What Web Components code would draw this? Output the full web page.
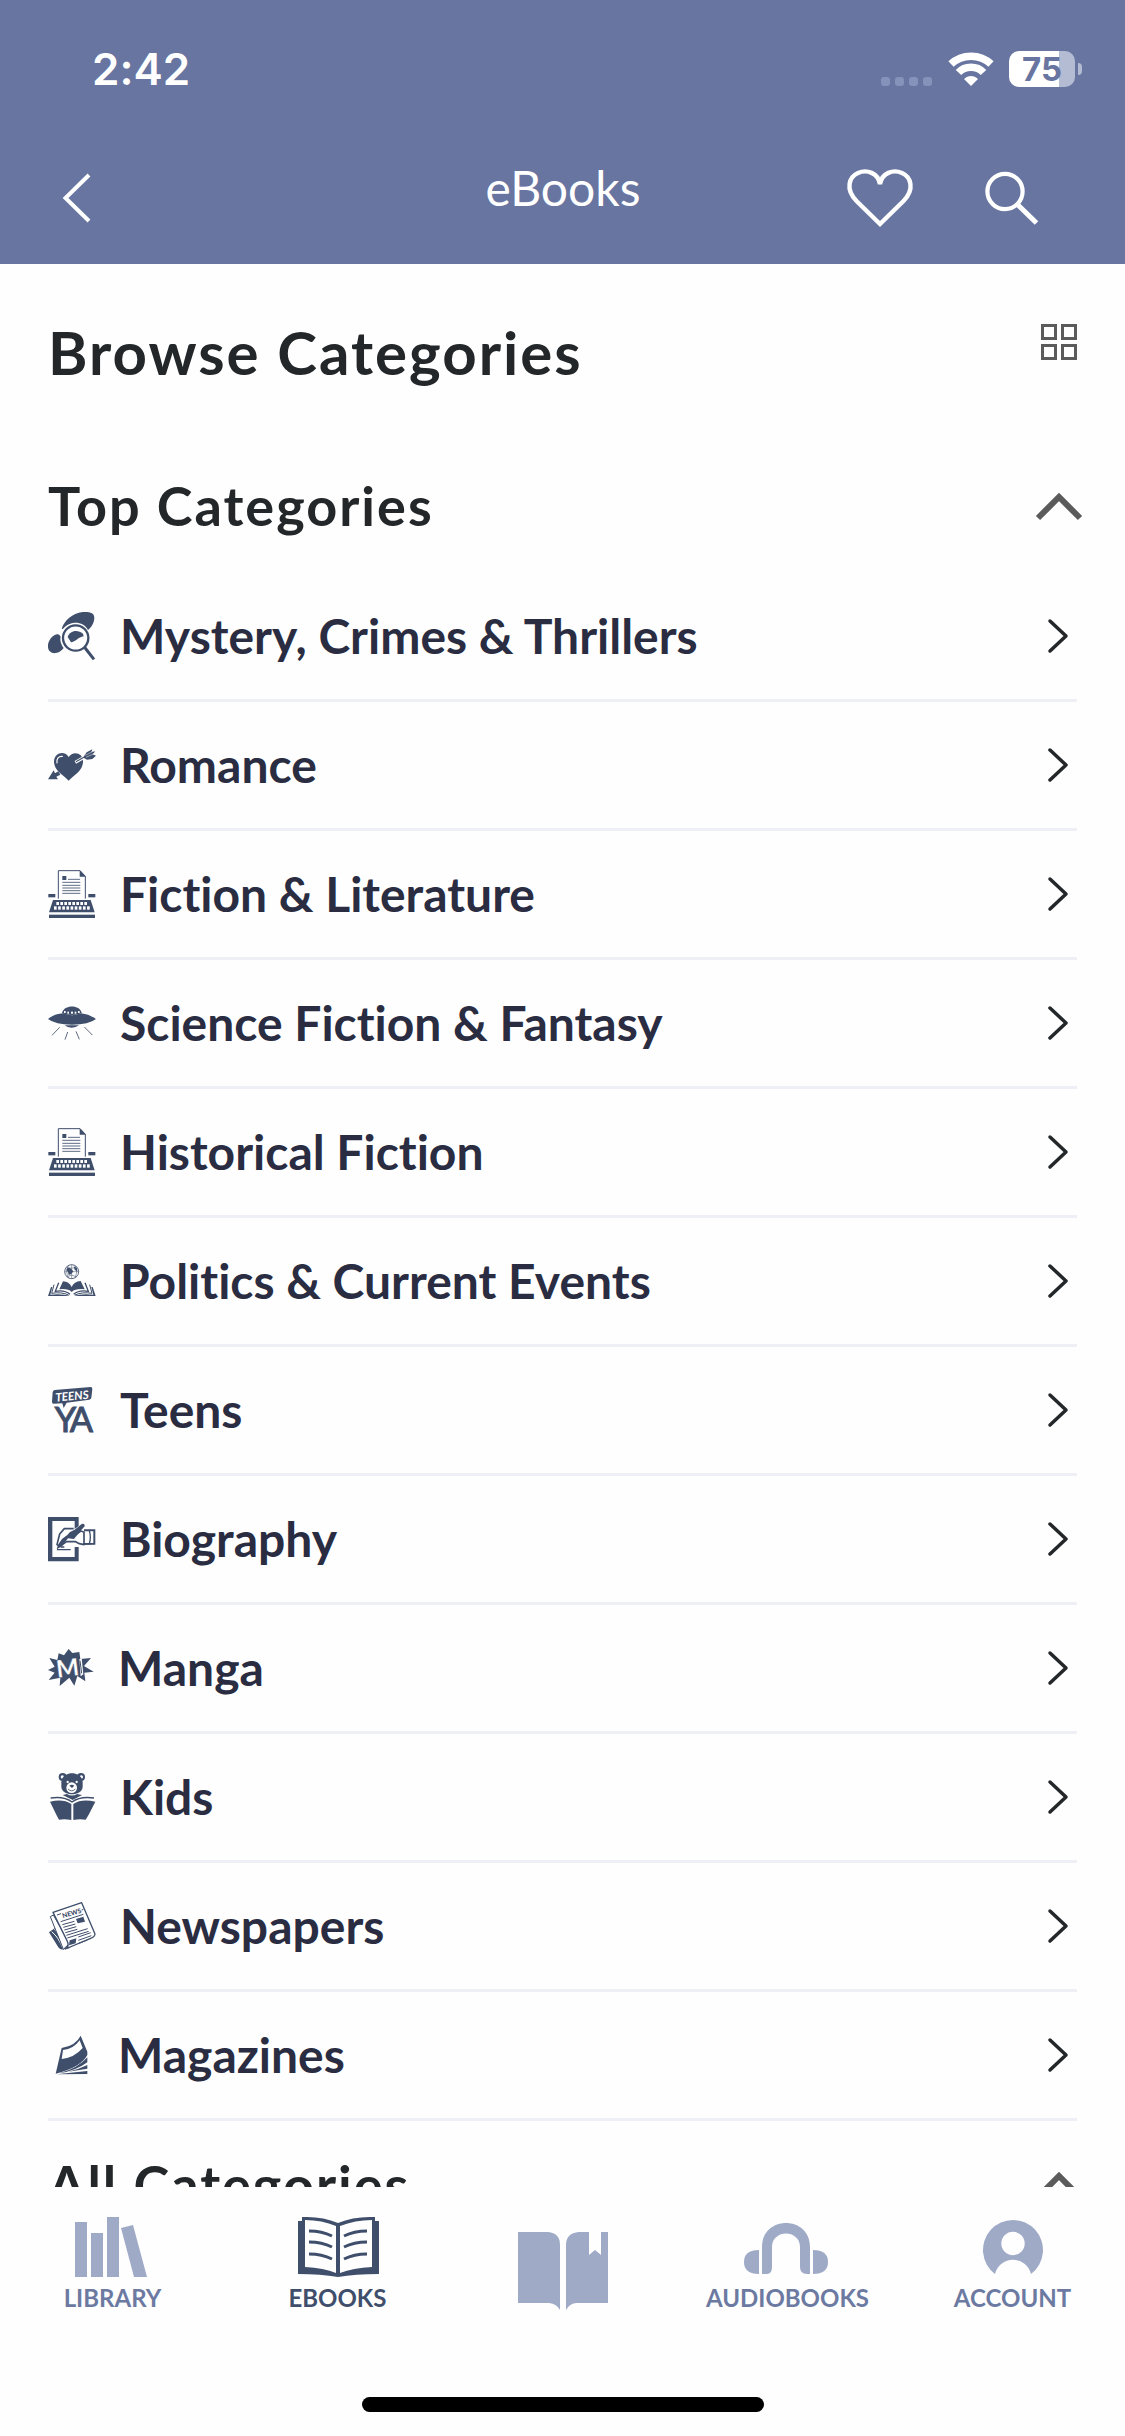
<!DOCTYPE html>
<html lang="en">
<head>
<meta charset="utf-8">
<meta name="viewport" content="width=device-width, initial-scale=1">
<title>eBooks</title>
<style>
  html, body { height: 100%; margin: 0; }
  body {
    --brand: #6875a1;
    --heading: #232729;
    --row: #2a2d42;
    --glyph: #3f4e6b;
    --muted: #9faac7;
    --muted-text: #6c7aa2;
    --rule: #eef0f6;
    background: #fefefe;
    font-family: Lato, "Open Sans", sans-serif;
    font-variant-ligatures: none;
  }
</style>
</head>
<body>
<ebook-app>
  <status-bar slot="top" time="2:42" battery="75"></status-bar>
  <nav-bar slot="top">eBooks</nav-bar>
  <page-heading>Browse Categories</page-heading>
  <category-section heading="Top Categories">
    <category-row icon="mystery">Mystery, Crimes &amp; Thrillers</category-row>
    <category-row icon="romance">Romance</category-row>
    <category-row icon="typewriter">Fiction &amp; Literature</category-row>
    <category-row icon="ufo">Science Fiction &amp; Fantasy</category-row>
    <category-row icon="typewriter">Historical Fiction</category-row>
    <category-row icon="politics">Politics &amp; Current Events</category-row>
    <category-row icon="teens">Teens</category-row>
    <category-row icon="biography">Biography</category-row>
    <category-row icon="manga">Manga</category-row>
    <category-row icon="kids">Kids</category-row>
    <category-row icon="news">Newspapers</category-row>
    <category-row icon="magazine">Magazines</category-row>
  </category-section>
  <category-section heading="All Categories"></category-section>
  <tab-bar slot="bottom">
    <tab-item icon="library">LIBRARY</tab-item>
    <tab-item icon="ebooks" active>EBOOKS</tab-item>
    <tab-item icon="reader" label="Now reading"></tab-item>
    <tab-item icon="audio">AUDIOBOOKS</tab-item>
    <tab-item icon="account">ACCOUNT</tab-item>
  </tab-bar>
</ebook-app>

<script>
const keys = (y, x0, n, step, w, h) =>
  Array.from({ length: n }, (_, i) => `<rect x="${x0 + i * step}" y="${y}" width="${w}" height="${h}" fill="#fff"/>`).join('');

/* Each entry: [width, height, viewBox, markup] */
const ICONS = {
  back: [28, 50, '0 0 28 50', '<path d="M26 2 2.500 25 26 48" fill="none" stroke="#fff" stroke-width="4"/>'],
  heart: [66, 58, '0 0 66 58', '<path d="M33 55 9.500 32C-2 20 2 8 11 4 20 0 31 4 33 15 35 4 46 0 55 4 64 8 68 20 56.500 32Z" fill="none" stroke="#fff" stroke-width="4.400"/>'],
  search: [54, 54, '0 0 54 54', '<circle cx="20" cy="20.500" r="17.600" fill="none" stroke="#fff" stroke-width="4.200"/><path d="M32 33 51.500 52" stroke="#fff" stroke-width="5" fill="none"/>'],
  wifi: [46, 34, '0 0 46 34', '<g fill="none" stroke="#fff" stroke-width="7.500"><path d="M3 12C14 1.500 32 1.500 43 12"/><path d="M10.500 20.500C17 13.500 29 13.500 35.500 20.500"/></g><path d="M16 27C20 23 26 23 30 27L23 34Z" fill="#fff"/>'],
  grid: [36, 36, '0 0 36 36', '<g fill="none" stroke="#5b5b5b" stroke-width="3"><path d="M1.500 1.500H14.500V14.500H1.500ZM21.500 1.500H34.500V14.500H21.500ZM1.500 21.500H14.500V34.500H1.500ZM21.500 21.500H34.500V34.500H21.500Z"/></g>'],
  up: [46, 28, '0 0 46 28', '<path d="M2 26 23 5 44 26" fill="none" stroke="#5b5b5b" stroke-width="6"/>'],
  next: [20, 34, '0 0 20 34', '<path d="M2 2 18 17 2 32" fill="none" stroke="#232729" stroke-width="3.500" stroke-linecap="round" stroke-linejoin="round"/>'],

  mystery: [48, 48, '0 0 144 144', `
    <path d="M41 50C50 25 72 4 104 0 124-1 140 1 139 19 138 34 130 47 120 54 112 38 96 31 80 32 64 33 50 43 45 51Z"/>
    <path d="M27 67C13 69-2 88 0 106 1 119 12 125 24 123 36 121 42 114 47 108 39 98 35 82 38 74Q34 66 27 67Z"/>
    <circle cx="83" cy="78" r="38" fill="none" stroke="currentColor" stroke-width="7"/>
    <path d="M59 75C63 58 87 49 105 65L107 73C91 75 82 90 69 91Z"/>
    <path d="M109 105 138 142" stroke="currentColor" stroke-width="9" fill="none"/>`],
  romance: [48, 48, '0 0 144 144', `
    <path d="M62 119C48 103 18 89 18 62 18 34 51 27 62 48 74 29 105 34 105 62 105 89 77 103 62 119Z"/>
    <path d="M27 66C25 52 32 45 43 46" stroke="#fff" stroke-width="3.500" fill="none" stroke-linecap="round"/>
    <path d="M82 64 120 42" stroke="#fff" stroke-width="9"/>
    <path d="M0 115 17 88 21 97 31 91 37 101 25 107 30 115Z"/>
    <path d="M84 62 136 32" stroke="currentColor" stroke-width="3.500"/>
    <path d="M109 44 116 34 133 25 130 34 142 31 134 40 144 44 133 54 117 56 107 50Z"/>
    <path d="M112 43 137 30M114 49 138 38" stroke="#fff" stroke-width="1.500"/>`],
  typewriter: [48, 48, '0 0 144 144', `
    <path d="M31 86V2H96L112 19V86" fill="none" stroke="currentColor" stroke-width="3"/><path d="M95 0 114 20H95Z"/>
    <rect x="43" y="18" width="12" height="12"/>
    <path d="M60 28H96M43 37H97M43 46H97M43 54H97M43 62H97M43 70H97" stroke="currentColor" stroke-width="2.500"/>
    <rect x="1" y="72" width="21" height="10"/><rect x="121" y="72" width="21" height="10"/>
    <path d="M15 90H128L140 127H3Z"/><rect x="3" y="134" width="138" height="10"/>
    ${keys(96, 25, 8, 12, 8, 9)}${keys(109, 18, 9, 12.4, 8, 10)}`],
  ufo: [48, 48, '0 0 144 144', `
    <path d="M0 60Q20 44 46 43 72 54 99 43 124 46 144 60 123 77 72 77 22 77 0 60Z"/>
    <path d="M42 42C48 16 96 16 101 42 84 50 60 50 42 42Z"/>
    <g fill="#fff"><rect x="48" y="36" width="5" height="6"/><rect x="58" y="38" width="5" height="6"/><rect x="69" y="38" width="6" height="6"/><rect x="80" y="38" width="5" height="6"/><rect x="90" y="36" width="5" height="6"/></g>
    <path d="M50 79H93Q84 86 71 86 58 86 50 79Z"/>
    <path d="M35 85 12 109M59 99 51 122M84 97 94 121M109 84 133 108" stroke="currentColor" stroke-width="2.500"/>`],
  politics: [48, 48, '0 0 144 144', `
    <circle cx="71" cy="44" r="21" fill="none" stroke="currentColor" stroke-width="2.500"/>
    <path d="M50 44H92M71 23V65M56 30Q71 38 86 30M56 59Q71 50 86 59M62 25Q50 44 62 63M80 25Q92 44 80 63" fill="none" stroke="currentColor" stroke-width="1.500"/>
    <path d="M58 32 68 34 76 43 70 51 62 54 60 44 55 40ZM77 28 87 34 88 44 80 38Z"/>
    <path d="M45 73Q63 74 71 90 78 74 98 72L110 97Q83 94 71 105 60 94 34 97Z"/>
    <path d="M32 77 22 103Q50 98 66 112M111 77 121 103Q93 98 77 112" fill="none" stroke="currentColor" stroke-width="4"/>
    <path d="M18 83 11 109Q40 104 62 114M125 83 132 109Q103 104 81 114" fill="none" stroke="currentColor" stroke-width="3"/>
    <path d="M9 90 0 117H66Q45 110 7 113L13 90ZM134 90 143 117H77Q98 110 136 113L130 90Z"/>`],
  teens: [48, 48, '0 0 144 144', `
    <path d="M20 12 128 3Q133 3 133 9L130 35Q129 40 124 41L56 50 47 66 43 52 17 53Q11 53 12 47L14 18Q15 13 20 12Z"/>
    <text x="23" y="47" transform="rotate(-5 23 47)" font-family="Lato" font-weight="700" font-style="italic" font-size="35" fill="#fff">TEENS</text>
    <text x="20 65" y="138" font-family="Lato" font-weight="400" font-size="103" stroke="currentColor" stroke-width="3">YA</text>`],
  biography: [48, 48, '0 0 144 144', `
    <path d="M0 6H92V33L80 42V18H13V126H80V96H92V139H0Z"/>
    <path d="M77 41H49L35 57 27 89 35 94 56 80H83L94 86 108 89V51L98 48 81 61" fill="none" stroke="currentColor" stroke-width="5" stroke-linejoin="round"/>
    <path d="M26 103 30 89 42 72 58 60 66 51 80 44 101 27Q111 24 110 34L94 52 78 72 60 70 42 94Z"/>
    <path d="M27 104H68M38 96H49" stroke="currentColor" stroke-width="4"/>
    <path d="M108 46H139V86L108 87" fill="none" stroke="currentColor" stroke-width="6"/><path d="M124 47Q130 67 124 86" fill="none" stroke="currentColor" stroke-width="4"/>`],
  manga: [46, 48, '0 0 138 144', `
    <path d="M4 42 28 48 32 28 48 34 62 15 73 27 94 24 97 45 129 42 108 66 137 83 109 86 112 112 88 96 79 125 64 101 35 126 37 101 2 108 20 86 0 78 20 68Z"/>
    <text x="28" y="101" transform="rotate(-7 30 100)" font-family="Lato" font-weight="900" font-size="72" fill="#fff" stroke="#3f4e6b" stroke-width="1">M</text>
    <path d="M94 46 101 43 106 91 98 97Z" fill="#fff"/><path d="M96 50 101 88" stroke="currentColor" stroke-width="3"/>`],
  kids: [48, 48, '0 0 144 144', `
    <circle cx="44" cy="12" r="12"/><circle cx="99" cy="12" r="12"/><circle cx="43" cy="12" r="5" fill="#fff"/><circle cx="100" cy="12" r="5" fill="#fff"/>
    <path d="M40 28C42-8 102-8 104 28L104 42C101 71 43 71 40 42Z"/>
    <circle cx="59" cy="27" r="3.500" fill="#fff"/><circle cx="86" cy="27" r="3.500" fill="#fff"/>
    <circle cx="71" cy="44" r="16" fill="#fff"/><path d="M64 38Q72 33 79 38L72 45Z"/><path d="M60 48Q71 59 82 48" fill="none" stroke="currentColor" stroke-width="2.500"/>
    <path d="M44 66 57 63Q72 72 87 63L102 66 74 81Z"/>
    <path d="M8 75Q48 69 72 87 96 69 138 75" fill="none" stroke="currentColor" stroke-width="4"/>
    <path d="M6 86Q46 77 70 93V141Q50 137 33 140L25 125ZM142 86Q100 77 76 93V141Q94 137 113 140L122 125Z"/>`],
  news: [48, 48, '0 0 144 144', `
    <path d="M3 91 25 75 67 138 47 142Q37 145 31 136Z"/>
    <path d="M11 89Q32 106 45 140M19 82Q40 101 55 139" stroke="#fff" stroke-width="3" fill="none"/>
    <path d="M7 44 16 39 65 124 46 142Z" fill="#fff" stroke="currentColor" stroke-width="3"/>
    <path d="M15 31 101 2 141 96Q140 105 128 109L52 141Q66 133 57 116Z" fill="#fff" stroke="currentColor" stroke-width="4" stroke-linejoin="round"/>
    <text x="45" y="49" transform="rotate(-17 45 49)" font-family="Lato" font-weight="900" font-size="20">NEWS</text>
    <path d="M27 39 39 35M101 24 106 22M38 59 106 37M43 68 79 58M46 76 82 66M49 84 85 74M52 92 88 82M55 100 119 80M58 108 122 88M91 105 128 92M91 115 130 101M92 124 118 114" stroke="currentColor" stroke-width="3"/>
    <path d="M84 51 106 44 111 59 89 64ZM65 115 85 109 83 124 63 130Z"/>`],
  magazine: [46, 48, '0 0 138 144', `
    <path fill-rule="evenodd" d="M41 51Q83 44 98 14L118 62V72Q99 109 23 128ZM45 57 41 84Q79 80 104 51L95 28Q77 54 45 57Z"/>
    <path d="M118 79V94Q85 119 34 127 91 111 118 79ZM118 102V113L61 122Q92 115 118 102ZM118 120V129L25 130Z"/>`],

  library: [90, 60, '0 0 90 60', '<path d="M7 5H19V60H7ZM23 16H35V60H23ZM39 0H51V60H39ZM53 11 65 8 79 60H66Z"/>'],
  ebooks: [90, 60, '0 0 90 60', `
    <path fill-rule="evenodd" d="M5 4H9V0Q29-1 45 6 61-1 82 0V4H86V57Q62 57 45 60 28 57 5 57ZM12 3V50Q31 51 43 56V9Q29 3 12 3ZM79 3Q62 3 47 9V56Q60 51 79 50Z"/>
    <path d="M16 14Q29 14 39 19M16 25Q29 25 39 30M16 37Q29 37 39 42M74 14Q61 14 51 19M74 25Q61 25 51 30M74 37Q61 37 51 42" fill="none" stroke="currentColor" stroke-width="3"/>`],
  reader: [90, 78, '0 0 90 78', '<path d="M0 0H30Q42 1 42 13V78Q39 72 31 71H0ZM90 0H83V23L77 18 71 23V0H61Q48 1 48 13V78Q51 72 58 71H90Z"/>'],
  audio: [90, 60, '3 0 90 60', '<path d="M22 57V30C22-2 70-2 70 30V57H67Q60 57 60 50V30C60 12 32 12 32 30V50Q32 57 27 57ZM19 33V57Q4 57 4 45 4 33 19 33ZM73 33Q88 33 88 45 88 57 73 57Z"/>'],
  account: [90, 60, '0 0 90 60', '<path d="M27 57A30 30 0 1 1 63 57 18.500 18.500 0 0 0 27 57Z"/><circle cx="45" cy="26.500" r="11.700" fill="#fefefe"/>']
};

const define = (name, css, html, setup) => customElements.define(name, class extends HTMLElement {
  connectedCallback() {
    if (this.shadowRoot) return;
    const root = this.attachShadow({ mode: 'open' });
    root.innerHTML = `<style>:host,*{box-sizing:border-box}${css}</style>${typeof html === 'function' ? html(this) : html}`;
    if (setup) setup(this, root);
  }
});
const attr = (el, name) => el.getAttribute(name) || '';

define('ui-icon', ':host{display:block;flex:none} svg{display:block;fill:currentColor;overflow:visible}', el => {
  const [w, h, box, markup] = ICONS[attr(el, 'name')];
  return `<svg width="${w}" height="${h}" viewBox="${box}" aria-hidden="true">${markup}</svg>`;
});

define('ebook-app', `
  :host{display:flex;flex-direction:column;height:100vh;overflow:hidden}
  header{background:var(--brand);color:#fff;flex:none}
  main{flex:1;min-height:0;overflow:hidden;padding:52px 48px 0}
  footer{flex:none}`,
  '<header><slot name="top"></slot></header><main><slot></slot></main><footer><slot name="bottom"></slot></footer>');

define('status-bar', `
  :host{display:flex;align-items:center;justify-content:space-between;height:132px;padding:6px 43px 0 92px;font-family:Inter,sans-serif}
  .time{font-size:44px;font-weight:600;line-height:54px}
  .right{display:flex;align-items:center}
  .dots{display:flex;gap:5px;margin:24px 16px 0 0}
  .dots i{width:9px;height:9px;border-radius:3px;background:#8592ba}
  .battery{display:flex;align-items:center;justify-content:center;width:66px;height:36px;margin:0 3px 0 15px;border-radius:10px;background:linear-gradient(90deg,#fff 76%,#b4bcd3 76%);color:var(--brand);font-size:33px;font-weight:700;line-height:36px}
  .tip{width:4px;height:12px;border-radius:0 4px 4px 0;background:#b4bcd3}`,
  el => `<span class="time">${attr(el, 'time')}</span>
    <div class="right"><span class="dots"><i></i><i></i><i></i><i></i></span><ui-icon name="wifi"></ui-icon>
    <span class="battery">${attr(el, 'battery')}</span><span class="tip"></span></div>`);

define('nav-bar', `
  :host{display:grid;grid-template-columns:1fr auto 1fr;align-items:center;height:132px;padding:0 86px 0 63px}
  h1{margin:0 -12px 0 12px;padding-bottom:20px;font-size:48px;font-weight:400;line-height:58px}
  button{display:block;margin:0;padding:0;border:0;background:none;color:inherit}
  .actions{display:flex;align-items:center;justify-content:flex-end;gap:72px}
  .back{justify-self:start}`,
  `<button class="back" aria-label="Back"><ui-icon name="back"></ui-icon></button>
   <h1><slot></slot></h1>
   <div class="actions"><button aria-label="Favourites"><ui-icon name="heart"></ui-icon></button><button aria-label="Search"><ui-icon name="search"></ui-icon></button></div>`);

define('page-heading', `
  :host{display:flex;align-items:flex-start;justify-content:space-between;margin-bottom:54px;color:var(--heading)}
  h2{margin:0;font-size:60px;font-weight:700;line-height:72px;letter-spacing:2px}
  button{margin:0;padding:8px 0 0;border:0;background:none}`,
  '<h2><slot></slot></h2><button aria-label="Grid view"><ui-icon name="grid"></ui-icon></button>');

define('category-section', `
  :host{display:block;color:var(--heading)}
  h3{margin:0;padding:32px 0 35px}
  button{display:flex;align-items:center;justify-content:space-between;width:calc(100% + 5px);margin:0;padding:0;border:0;background:none;color:inherit;font:700 54px/64px Lato,sans-serif;letter-spacing:2px;text-align:left}
  [role=list]{display:block}`,
  el => `<h3><button aria-expanded="true">${attr(el, 'heading')}<ui-icon name="up"></ui-icon></button></h3><div role="list"><slot></slot></div>`,
  el => { for (const row of el.children) row.setAttribute('role', 'listitem'); });

define('category-row', `
  :host{display:block;border-bottom:3px solid var(--rule)}
  a{display:flex;align-items:center;gap:24px;height:126px;padding-right:9px;color:var(--row);text-decoration:none;font-size:48px;font-weight:700;line-height:58px}
  .glyph{color:var(--glyph)}
  span{flex:1}`,
  el => `<a href="#${attr(el, 'icon')}"><ui-icon class="glyph" name="${attr(el, 'icon')}"></ui-icon><span><slot></slot></span><ui-icon name="next"></ui-icon></a>`);

define('tab-bar', `
  :host{display:block;padding-bottom:24px;background:#fefefe}
  nav{display:flex;height:210px}
  .home{width:402px;height:15px;margin:0 auto;border-radius:8px;background:#000}`,
  '<nav aria-label="Main"><slot></slot></nav><div class="home"></div>');

define('tab-item', `
  :host{display:block;flex:1 1 0;min-width:0;color:var(--muted);--label:var(--muted-text)}
  :host([active]){color:var(--glyph);--label:var(--glyph)}
  a{display:flex;flex-direction:column;align-items:center;gap:6px;padding-top:30px;color:inherit;text-decoration:none}
  :host([icon=reader]) a{padding-top:45px}
  span{color:var(--label);font-size:24px;font-weight:700;line-height:30px}`,
  el => `<a href="#${attr(el, 'icon')}"${el.hasAttribute('label') ? ` aria-label="${attr(el, 'label')}"` : ''}${el.hasAttribute('active') ? ' aria-current="page"' : ''}><ui-icon name="${attr(el, 'icon')}"></ui-icon><span><slot></slot></span></a>`);
</script>
</body>
</html>
